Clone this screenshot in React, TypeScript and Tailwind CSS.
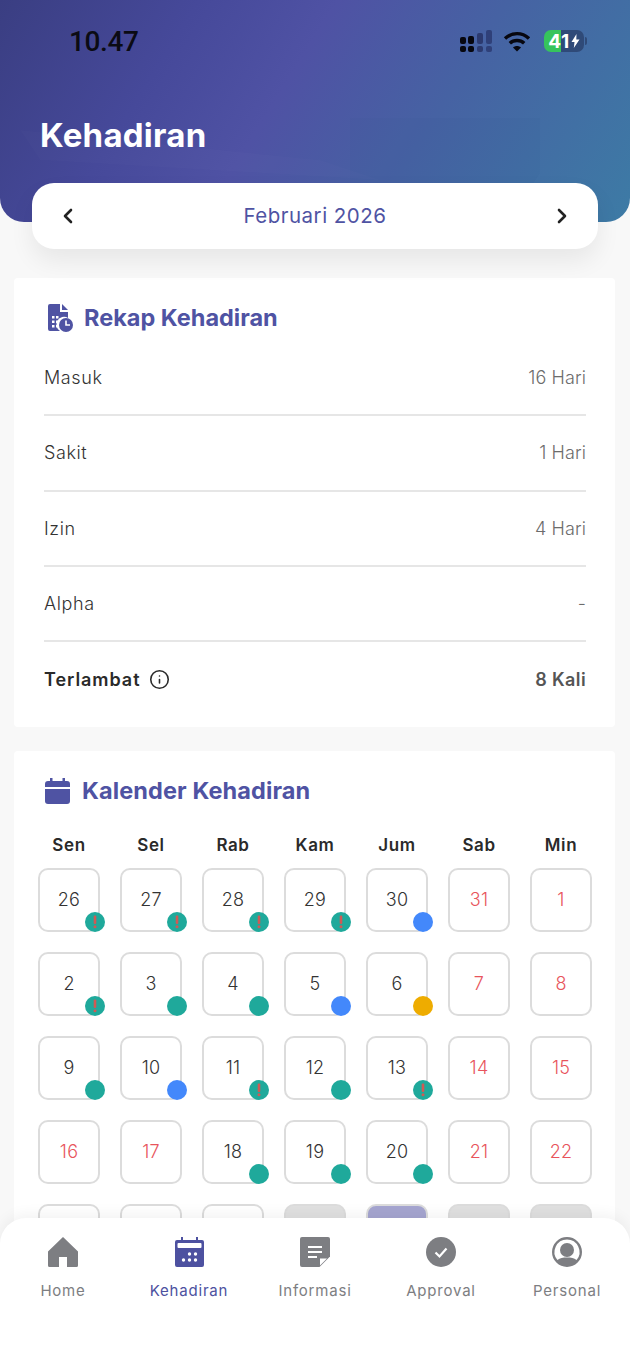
import React from "react";
import { ChevronLeft, ChevronRight, Info } from "lucide-react";

type B = "w" | "t" | "b" | "y" | null;
type Cell = { d: number; red?: boolean; b?: B; bg?: string };

const R = (d: number): Cell => ({ d, red: true });
const C = (d: number, b: B): Cell => ({ d, b });

const rows: Cell[][] = [
  [C(26, "w"), C(27, "w"), C(28, "w"), C(29, "w"), C(30, "b"), R(31), R(1)],
  [C(2, "w"), C(3, "t"), C(4, "t"), C(5, "b"), C(6, "y"), R(7), R(8)],
  [C(9, "t"), C(10, "b"), C(11, "w"), C(12, "t"), C(13, "w"), R(14), R(15)],
  [R(16), R(17), C(18, "t"), C(19, "t"), C(20, "t"), R(21), R(22)],
  [
    C(23, null),
    C(24, null),
    C(25, null),
    { d: 26, bg: "bg-[#e0e0e0]" },
    { d: 27, bg: "bg-[#a5a5d0]" },
    { d: 28, bg: "bg-[#e0e0e0]" },
    { d: 1, bg: "bg-[#e0e0e0]" },
  ],
];

function Badge({ b }: { b: B }) {
  if (!b) return null;
  const color = b === "b" ? "bg-[#4388fb]" : b === "y" ? "bg-[#eeac00]" : "bg-[#1fa99b]";
  return (
    <span className={`absolute -right-[7px] -bottom-[2px] flex h-[20px] w-[20px] items-center justify-center rounded-full ${color}`}>
      {b === "w" && (
        <svg width="6" height="14" viewBox="0 0 6 14">
          <rect x="1.7" y="0.5" width="2.6" height="8.5" rx="1" fill="#cf5a55" />
          <circle cx="3" cy="11.8" r="1.5" fill="#cf5a55" />
        </svg>
      )}
    </span>
  );
}

function DayCell({ c }: { c: Cell }) {
  return (
    <div className="flex justify-center">
      <div
        className={`relative flex h-[64px] w-[62px] items-center justify-center rounded-[10px] border-2 border-[#dcdcdc] pb-[1px] text-[18px] font-[350] tracking-[0.2px] ${c.bg ?? "bg-white"} ${c.red ? "text-[#e8545c]" : "text-[#333]"}`}
      >
        {c.d}
        <Badge b={c.b ?? null} />
      </div>
    </div>
  );
}

function StatRow({ label, value, last, bold }: { label: React.ReactNode; value: string; last?: boolean; bold?: boolean }) {
  return (
    <div className={`flex h-[75.33px] items-center justify-between text-[18px] font-[350] ${last ? "" : "border-b-2 border-[#e6e6e6]"}`}>
      <div className={`flex items-center ${bold ? "font-semibold tracking-[0.95px] text-[#2a2a2a]" : "tracking-[0.6px] text-[#333]"}`}>{label}</div>
      <div className={bold ? "font-semibold tracking-[0.4px] text-[#555]" : "tracking-[0.1px] text-[#6c6c6c]"}>{value}</div>
    </div>
  );
}

function NavItem({ icon, label, active }: { icon: React.ReactNode; label: string; active?: boolean }) {
  return (
    <div className={`flex flex-col items-center ${active ? "text-[#4d51a0]" : "text-[#7d7e82]"}`}>
      <div className="flex h-[32px] w-[32px] items-center justify-center">{icon}</div>
      <div className="mt-[13px] text-[15px] leading-[20px] font-normal tracking-[0.8px]">{label}</div>
    </div>
  );
}

export default function App() {
  return (
    <div className="relative h-[1362px] w-[630px] overflow-hidden bg-[#f8f8f8] font-['Inter',sans-serif]">
      {/* Header */}
      <div className="relative h-[222px] overflow-hidden rounded-b-[24px] bg-[linear-gradient(122deg,#3a3e82_0%,#46499a_26%,#4f52a4_44%,#4662a3_66%,#3d7ba5_100%)]">
        <svg className="absolute inset-0" width="630" height="222" viewBox="0 0 630 222" fill="none">
          <path d="M350 118h190v55l-20 30H350z" fill="#1c3a70" fillOpacity="0.03" />
          <path d="M20 130l300 30 60 20-340-20z" fill="#ffffff" fillOpacity="0.01" />
        </svg>
        <div className="relative flex h-[82px] items-center justify-between pr-[46px] pl-[69px]">
          <span className="mt-[1px] font-['Roboto',sans-serif] text-[28px] font-medium tracking-[-0.4px] text-[#0b0b14]">10.47</span>
          <div className="flex items-center">
            <svg width="32" height="22" viewBox="0 0 32 22">
              <rect x="0" y="7" width="6" height="7" rx="2" fill="#07070f" />
              <rect x="0" y="16" width="6" height="6" rx="2" fill="#07070f" />
              <rect x="8" y="6" width="6" height="8" rx="2" fill="#07070f" />
              <rect x="8" y="16" width="6" height="6" rx="2" fill="#07070f" />
              <rect x="17" y="3" width="6" height="11" rx="2" fill="#2c3a70" />
              <rect x="17" y="16" width="6" height="6" rx="2" fill="#2c3a70" />
              <rect x="26" y="0" width="6" height="14" rx="2" fill="#2f4079" />
              <rect x="26" y="16" width="6" height="6" rx="2" fill="#2f4079" />
            </svg>
            <svg className="ml-[11px]" width="28" height="21" viewBox="0 0 28 21" fill="none" stroke="#07070f" strokeWidth="3.4">
              <path d="M2 7.6C9 1 19 1 26 7.6" />
              <path d="M6.8 12.3c4-3.8 10.400-3.800 14.400 0" />
              <path d="M14 20.500l-4-4c2.300-2 5.700-2 8 0z" fill="#07070f" stroke="none" />
            </svg>
            <div className="relative ml-[13px] flex h-[22px] w-[40px] items-center justify-center rounded-[7px] bg-[linear-gradient(90deg,#36c45c_42%,#2f4a78_42%)] text-[19px] leading-none font-bold tracking-[0.5px] text-white">
              41
              <svg width="9" height="14" viewBox="0 0 9 14" className="ml-[1px]">
                <path d="M5.500 0L0.500 8h3L2.800 14l5.700-8.500h-3.200z" fill="#fff" />
              </svg>
              <span className="absolute top-[7px] -right-[3px] h-[8px] w-[2px] rounded-r-[2px] bg-[#2f4a78]" />
            </div>
          </div>
        </div>
        <div className="relative mt-[33px] pl-[40px] text-[33px] leading-[40px] font-bold tracking-[0.25px] text-white">Kehadiran</div>
      </div>

      {/* Month selector */}
      <div className="relative mx-[32px] -mt-[39px] flex h-[66px] items-center justify-between rounded-[22px] bg-white px-[24px] shadow-[0_12px_24px_rgba(0,0,0,0.07)]">
        <ChevronLeft size={24} strokeWidth={2.6} className="text-[#222]" />
        <span className="text-[20.5px] font-normal tracking-[0.5px] text-[#4f53a3]">Februari 2026</span>
        <ChevronRight size={24} strokeWidth={2.6} className="text-[#222]" />
      </div>

      {/* Rekap */}
      <div className="mt-[29px] ml-[14px] h-[449px] w-[601px] rounded-[4px] bg-white pt-[26px] pr-[29px] pl-[30px]">
        <div className="mb-[9px] flex h-[28px] items-center">
          <svg className="ml-[4px]" width="25" height="28" viewBox="0 0 25 28">
            <path d="M2 0h10v8h8v6a7.500 7.500 0 0 0-8 13H2a2 2 0 0 1-2-2V2a2 2 0 0 1 2-2z" fill="#4f53a3" />
            <path d="M14 0l6 6h-6z" fill="#4f53a3" />
            <path d="M4 12h2.500v2.500H4zM8 12h2.500v2.500H8zM4 16.500h2.500V19H4zM8 16.500h2.500V19H8zM4 21h2.500v2.500H4zM8 21h2.500v2.500H8z" fill="#fff" />
            <circle cx="18" cy="21" r="7" fill="#4f53a3" />
            <path d="M18 16.500V21h4" fill="none" stroke="#fff" strokeWidth="1.600" />
          </svg>
          <span className="ml-[11px] text-[23.5px] font-bold text-[#4f53a3]">Rekap Kehadiran</span>
        </div>
        <StatRow label="Masuk" value="16 Hari" />
        <StatRow label="Sakit" value="1 Hari" />
        <StatRow label="Izin" value="4 Hari" />
        <StatRow label="Alpha" value="-" />
        <StatRow
          last
          bold
          label={
            <>
              Terlambat
              <Info size={21} strokeWidth={1.8} className="ml-[9px] text-[#2a2a2a]" />
            </>
          }
          value="8 Kali"
        />
      </div>

      {/* Kalender */}
      <div className="mt-[24px] ml-[14px] w-[601px] rounded-[4px] bg-white pt-[26px] pb-[20px]">
        <div className="flex h-[28px] items-center pl-[31px]">
          <svg width="25" height="26" viewBox="0 0 25 26">
            <path d="M5 0h2.500v3h10V0H20v3h2a3 3 0 0 1 3 3v3H0V6a3 3 0 0 1 3-3h2z" fill="#4f53a3" />
            <path d="M0 11h25v12a3 3 0 0 1-3 3H3a3 3 0 0 1-3-3z" fill="#4f53a3" />
          </svg>
          <span className="ml-[12px] text-[23.5px] font-bold tracking-[0.1px] text-[#4f53a3]">Kalender Kehadiran</span>
        </div>
        <div className="mt-[23px] ml-[14px] grid w-[574px] grid-cols-7">
          {["Sen", "Sel", "Rab", "Kam", "Jum", "Sab", "Min"].map((d) => (
            <div key={d} className="flex h-[36px] items-center justify-center text-[17px] font-semibold tracking-[0.6px] text-[#2a2a2a]">
              {d}
            </div>
          ))}
        </div>
        <div className="mt-[4px] ml-[14px] grid w-[574px] grid-cols-7 gap-y-[20px]">
          {rows.flat().map((c, i) => (
            <DayCell key={i} c={c} />
          ))}
        </div>
      </div>

      {/* Bottom nav */}
      <div className="absolute right-0 bottom-0 left-0 grid h-[144px] grid-cols-5 rounded-t-[26px] bg-white pt-[18px] shadow-[0_-4px_14px_rgba(0,0,0,0.05)]">
        <NavItem
          label="Home"
          icon={
            <svg width="30" height="30" viewBox="0 0 30 30" fill="currentColor">
              <path d="M15 0L30 14.500V28.500a1.500 1.500 0 0 1-1.500 1.500H19V20h-8v10H1.500A1.500 1.500 0 0 1 0 28.500V14.500z" />
            </svg>
          }
        />
        <NavItem
          active
          label="Kehadiran"
          icon={
            <svg width="29" height="30" viewBox="0 0 29 30" fill="currentColor">
              <path d="M6 0h2v3h13V0h2v3h4a2 2 0 0 1 2 2v23a2 2 0 0 1-2 2H2a2 2 0 0 1-2-2V5a2 2 0 0 1 2-2h4z" />
              <rect x="2.500" y="6" width="24" height="5" rx="1" fill="#fff" />
              <g fill="#fff">
                <circle cx="14.500" cy="17" r="1.700" />
                <circle cx="20.500" cy="17" r="1.700" />
                <circle cx="8.500" cy="23" r="1.700" />
                <circle cx="14.500" cy="23" r="1.700" />
                <circle cx="20.500" cy="23" r="1.700" />
              </g>
            </svg>
          }
        />
        <NavItem
          label="Informasi"
          icon={
            <svg width="30" height="30" viewBox="0 0 30 30" fill="currentColor">
              <path d="M2 0h26a2 2 0 0 1 2 2v17.500L19.500 30H2a2 2 0 0 1-2-2V2a2 2 0 0 1 2-2z" />
              <path d="M8 10h14M8 15h14M8 20h9" stroke="#fff" strokeWidth="2.200" fill="none" />
              <path d="M20 28.500V21.500h7z" fill="#fff" />
            </svg>
          }
        />
        <NavItem
          label="Approval"
          icon={
            <svg width="30" height="30" viewBox="0 0 30 30" fill="currentColor">
              <circle cx="15" cy="15" r="15" />
              <path d="M9.500 15.500l4 4 7-8" fill="none" stroke="#fff" strokeWidth="2.200" />
            </svg>
          }
        />
        <NavItem
          label="Personal"
          icon={
            <svg width="30" height="30" viewBox="0 0 30 30" fill="currentColor">
              <path fillRule="evenodd" d="M15 0a15 15 0 1 1 0 30a15 15 0 0 1 0-30zm0 2.500a12.500 12.500 0 0 0-9.600 20.500C8 21 11 20.500 15 20.500s7 .5 9.600 2.500A12.500 12.500 0 0 0 15 2.500z" />
              <circle cx="15" cy="13" r="7" />
            </svg>
          }
        />
      </div>
    </div>
  );
}
